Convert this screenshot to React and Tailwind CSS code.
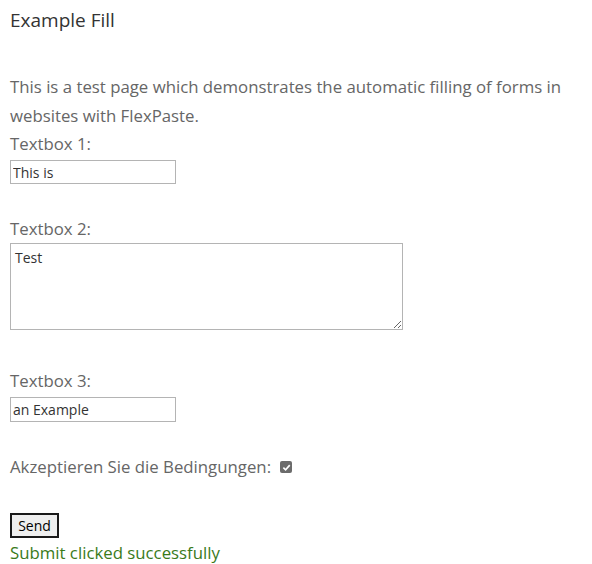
export default function App() {
  return (
    <div className="w-[592px] h-[564px] bg-white px-[10px] pt-[6px] font-['Open_Sans',sans-serif] text-[#666] overflow-hidden">
      <h1 className="text-[19px] leading-[28px] text-[#333] font-normal">Example Fill</h1>
      <p className="mt-[38px] text-[16.8px] leading-[29px] w-[572px]">
        This is a test page which demonstrates the automatic filling of forms in websites with FlexPaste.
      </p>
      <div className="flex flex-col items-start">
        <label className="text-[16.8px] leading-[28px]">Textbox 1:</label>
        <input
          type="text"
          defaultValue="This is"
          className="mt-[2px] w-[166px] h-[24px] border border-[#b4b4b4] px-[2px] text-[14px] text-[#333] outline-none"
        />
        <label className="mt-[31px] text-[16.8px] leading-[28px]">Textbox 2:</label>
        <textarea
          defaultValue="Test"
          className="w-[393px] h-[87px] border border-[#b4b4b4] px-[4px] py-[4px] text-[14px] leading-[20px] text-[#333] outline-none resize"
        />
        <label className="mt-[37px] text-[16.8px] leading-[28px]">Textbox 3:</label>
        <input
          type="text"
          defaultValue="an Example"
          className="mt-[2px] w-[166px] h-[25px] border border-[#b4b4b4] px-[2px] text-[14px] text-[#333] outline-none"
        />
        <div className="mt-[31px] flex items-center text-[16.8px] leading-[28px]">
          <span>Akzeptieren Sie die Bedingungen:</span>
          <span className="ml-[9px] w-[12px] h-[12px] rounded-[2px] bg-[#6b6b6b] flex items-center justify-center">
            <svg width="9" height="9" viewBox="0 0 10 10">
              <path d="M1.5 5.2 L4 7.6 L8.6 2.4" fill="none" stroke="white" strokeWidth="1.8" />
            </svg>
          </span>
        </div>
        <button className="mt-[32px] w-[49px] h-[25px] border-2 border-[#1a1a1a] bg-[#efefef] text-[14px] text-black leading-none">
          Send
        </button>
        <div className="mt-[1px] text-[16.8px] leading-[28px] text-[#3a7a1a]">Submit clicked successfully</div>
      </div>
    </div>
  );
}
